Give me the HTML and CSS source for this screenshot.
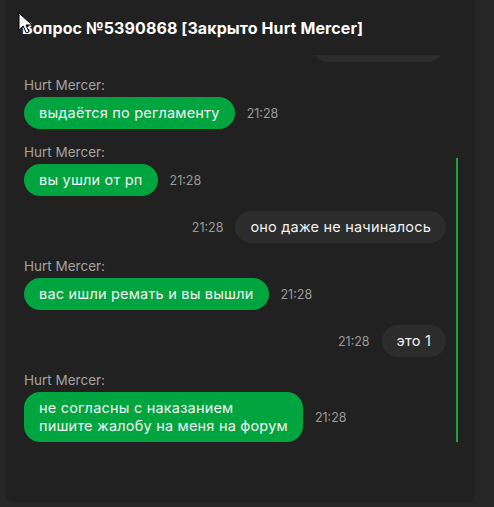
FILE: index.html
```html
<!DOCTYPE html>
<html lang="ru">
<head>
  <meta charset="UTF-8">
  <title>Вопрос №5390868</title>
  <link rel="stylesheet" href="styles.css">
</head>
<body>
  <div class="panel">
    <h1 class="title">Вопрос №5390868 [Закрыто Hurt Mercer]</h1>
    <div class="chat">
      <div class="messages">
        <div class="msg out first">
          <div class="bubble blank"></div>
        </div>
        <div class="msg in">
          <div class="sender">Hurt Mercer:</div>
          <div class="row">
            <div class="bubble">выдаётся по регламенту</div>
            <span class="time">21:28</span>
          </div>
        </div>
        <div class="msg in">
          <div class="sender">Hurt Mercer:</div>
          <div class="row">
            <div class="bubble">вы ушли от рп</div>
            <span class="time">21:28</span>
          </div>
        </div>
        <div class="msg out">
          <span class="time">21:28</span>
          <div class="bubble">оно даже не начиналось</div>
        </div>
        <div class="msg in">
          <div class="sender">Hurt Mercer:</div>
          <div class="row">
            <div class="bubble">вас ишли ремать и вы вышли</div>
            <span class="time">21:28</span>
          </div>
        </div>
        <div class="msg out">
          <span class="time">21:28</span>
          <div class="bubble">это 1</div>
        </div>
        <div class="msg in">
          <div class="sender">Hurt Mercer:</div>
          <div class="row">
            <div class="bubble">не согласны с наказанием<br>пишите жалобу на меня на форум</div>
            <span class="time">21:28</span>
          </div>
        </div>
      </div>
      <div class="scrollbar"><div class="thumb"></div></div>
    </div>
  </div>
  <svg class="cursor" width="16" height="23" viewBox="0 0 16 23">
    <path d="M1 1 L1 18 L5.2 14 L8.3 21 L11 19.8 L8 13 L14 13 Z" fill="#fff" stroke="#000" stroke-width="1"/>
  </svg>
</body>
</html>
```

FILE: styles.css
```css
body {
  margin: 0;
  background-color: #262626;
  font-family: 'Inter', 'Noto Sans', sans-serif;
  color: #f0f0f0;
  height: 507px;
  overflow: hidden;
}
.panel {
  margin-left: 6px;
  width: 469px;
  height: 502px;
  background-color: #212121;
  border-radius: 0 0 8px 8px;
  display: flex;
  flex-direction: column;
}
.title {
  margin: 0;
  padding: 18px 16px 0 16px;
  height: 37px;
  font-size: 16px;
  font-weight: 700;
  color: #fff;
  letter-spacing: 0.1px;
}
.chat {
  display: flex;
  height: 405px;
  overflow: hidden;
}
.messages {
  flex: 1;
  padding: 0 0 0 18px;
  display: flex;
  flex-direction: column;
  gap: 15px;
}
.msg.first {
  margin-top: -25px;
}
.msg.out {
  display: flex;
  justify-content: flex-end;
  align-items: center;
  gap: 12px;
}
.msg.out .bubble {
  background-color: #2c2c2c;
}
.bubble.blank {
  width: 132px;
  height: 32px;
  padding: 0;
  margin-right: 2px;
}
.sender {
  font-size: 13.5px;
  color: #a3a3a3;
  height: 16px;
  margin-bottom: 4px;
}
.row {
  display: flex;
  align-items: center;
  gap: 12px;
}
.bubble {
  background-color: #00a53f;
  color: #f2f2f2;
  font-size: 14.5px;
  letter-spacing: 0.2px;
  line-height: 18px;
  padding: 7px 15px;
  border-radius: 16px;
}
.time {
  font-size: 12.5px;
  color: #9a9a9a;
}
.scrollbar {
  width: 29px;
  display: flex;
  justify-content: flex-start;
  padding-left: 10px;
  box-sizing: border-box;
}
.thumb {
  width: 2px;
  height: 284px;
  margin-top: 103px;
  background-color: #1aa33c;
}
.cursor {
  position: absolute;
  left: 18px;
  top: 12px;
}
```
